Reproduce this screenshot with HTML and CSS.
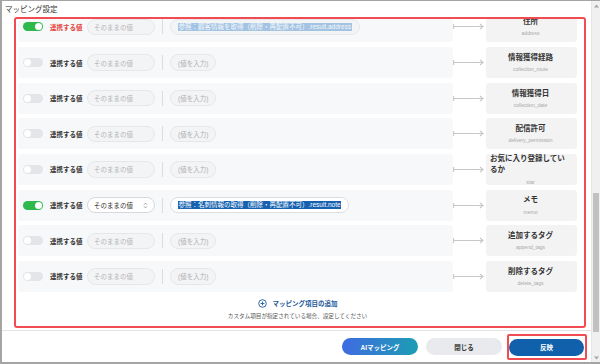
FILE: index.html
```html
<!DOCTYPE html>
<html lang="ja">
<head>
<meta charset="utf-8">
<link rel="stylesheet" href="styles.css">
</head>
<body>
<div class="frame">
  <div class="main">
    <div class="title">マッピング設定</div>
    <div class="mapbox">
      <div class="list">
        <div class="row">
          <div class="src">
            <span class="toggle on"><span class="knob"></span></span>
            <span class="label alert">連携する値</span>
            <span class="sel">そのままの値</span>
            <span class="sep"></span>
            <span class="val"><span class="mark pale">参照：顧客情報を取得（削除・再配置不可）.result.address</span></span>
          </div>
          <div class="arrow"><svg width="31" height="7" viewBox="0 0 31 7"><path d="M0.6 1v5M0.6 3.5H30M27 1l3 2.5-3 2.5" fill="none" stroke="#c8c8c8" stroke-width="1.1"/></svg></div>
          <div class="dst"><div class="t">住所</div><div class="s">address</div></div>
        </div>
        <div class="row">
          <div class="src">
            <span class="toggle"><span class="knob"></span></span>
            <span class="label">連携する値</span>
            <span class="sel">そのままの値</span>
            <span class="sep"></span>
            <span class="val">(値を入力)</span>
          </div>
          <div class="arrow"><svg width="31" height="7" viewBox="0 0 31 7"><path d="M0.6 1v5M0.6 3.5H30M27 1l3 2.5-3 2.5" fill="none" stroke="#c8c8c8" stroke-width="1.1"/></svg></div>
          <div class="dst"><div class="t">情報獲得経路</div><div class="s">collection_route</div></div>
        </div>
        <div class="row">
          <div class="src">
            <span class="toggle"><span class="knob"></span></span>
            <span class="label">連携する値</span>
            <span class="sel">そのままの値</span>
            <span class="sep"></span>
            <span class="val">(値を入力)</span>
          </div>
          <div class="arrow"><svg width="31" height="7" viewBox="0 0 31 7"><path d="M0.6 1v5M0.6 3.5H30M27 1l3 2.5-3 2.5" fill="none" stroke="#c8c8c8" stroke-width="1.1"/></svg></div>
          <div class="dst"><div class="t">情報獲得日</div><div class="s">collection_date</div></div>
        </div>
        <div class="row">
          <div class="src">
            <span class="toggle"><span class="knob"></span></span>
            <span class="label">連携する値</span>
            <span class="sel">そのままの値</span>
            <span class="sep"></span>
            <span class="val">(値を入力)</span>
          </div>
          <div class="arrow"><svg width="31" height="7" viewBox="0 0 31 7"><path d="M0.6 1v5M0.6 3.5H30M27 1l3 2.5-3 2.5" fill="none" stroke="#c8c8c8" stroke-width="1.1"/></svg></div>
          <div class="dst"><div class="t">配信許可</div><div class="s">delivery_permission</div></div>
        </div>
        <div class="row">
          <div class="src">
            <span class="toggle"><span class="knob"></span></span>
            <span class="label">連携する値</span>
            <span class="sel">そのままの値</span>
            <span class="sep"></span>
            <span class="val">(値を入力)</span>
          </div>
          <div class="arrow"><svg width="31" height="7" viewBox="0 0 31 7"><path d="M0.6 1v5M0.6 3.5H30M27 1l3 2.5-3 2.5" fill="none" stroke="#c8c8c8" stroke-width="1.1"/></svg></div>
          <div class="dst"><div class="t">お気に入り登録しているか</div><div class="s">star</div></div>
        </div>
        <div class="row">
          <div class="src">
            <span class="toggle on"><span class="knob"></span></span>
            <span class="label">連携する値</span>
            <span class="sel active">そのままの値<svg class="updown" width="5" height="7" viewBox="0 0 5 7"><path d="M1 2.6l1.5-1.5 1.5 1.5M1 4.4l1.5 1.5 1.5-1.5" fill="none" stroke="#777" stroke-width="0.7"/></svg></span>
            <span class="sep"></span>
            <span class="val active"><span class="mark dark">参照：名刺情報の取得（削除・再配置不可）.result.note</span></span>
          </div>
          <div class="arrow"><svg width="31" height="7" viewBox="0 0 31 7"><path d="M0.6 1v5M0.6 3.5H30M27 1l3 2.5-3 2.5" fill="none" stroke="#c8c8c8" stroke-width="1.1"/></svg></div>
          <div class="dst"><div class="t">メモ</div><div class="s">memo</div></div>
        </div>
        <div class="row">
          <div class="src">
            <span class="toggle"><span class="knob"></span></span>
            <span class="label">連携する値</span>
            <span class="sel">そのままの値</span>
            <span class="sep"></span>
            <span class="val">(値を入力)</span>
          </div>
          <div class="arrow"><svg width="31" height="7" viewBox="0 0 31 7"><path d="M0.6 1v5M0.6 3.5H30M27 1l3 2.5-3 2.5" fill="none" stroke="#c8c8c8" stroke-width="1.1"/></svg></div>
          <div class="dst"><div class="t">追加するタグ</div><div class="s">append_tags</div></div>
        </div>
        <div class="row">
          <div class="src">
            <span class="toggle"><span class="knob"></span></span>
            <span class="label">連携する値</span>
            <span class="sel">そのままの値</span>
            <span class="sep"></span>
            <span class="val">(値を入力)</span>
          </div>
          <div class="arrow"><svg width="31" height="7" viewBox="0 0 31 7"><path d="M0.6 1v5M0.6 3.5H30M27 1l3 2.5-3 2.5" fill="none" stroke="#c8c8c8" stroke-width="1.1"/></svg></div>
          <div class="dst"><div class="t">削除するタグ</div><div class="s">delete_tags</div></div>
        </div>
      </div>
      <div class="add">
        <svg width="9" height="9" viewBox="0 0 9 9"><circle cx="4.5" cy="4.5" r="3.8" fill="none" stroke="#1d5b9b" stroke-width="0.9"/><path d="M4.5 2.6v3.8M2.6 4.5h3.8" stroke="#1d5b9b" stroke-width="0.9"/></svg>
        <span>マッピング項目の追加</span>
      </div>
      <div class="note">カスタム項目が指定されている場合、設定してください</div>
    </div>
    <div class="footer">
      <button class="btn ai">AIマッピング</button>
      <button class="btn close">閉じる</button>
      <span class="hl"><button class="btn apply">反映</button></span>
    </div>
  </div>
  <div class="scrollbar">
    <div class="sb-arrow"><svg width="5" height="4" viewBox="0 0 5 4"><path d="M0 3.5L2.5 0.5 5 3.5z" fill="#a5a5a5"/></svg></div>
    <div class="sb-track"><div class="sb-thumb"></div></div>
    <div class="sb-arrow"><svg width="5" height="4" viewBox="0 0 5 4"><path d="M0 0.5L2.5 3.5 5 0.5z" fill="#a5a5a5"/></svg></div>
  </div>
</div>
</body>
</html>
```

FILE: styles.css
```css
* { box-sizing: border-box; margin: 0; padding: 0; }
html, body { width: 600px; height: 364px; overflow: hidden; background: #fff; }
body { font-family: "Liberation Sans", "Noto Sans CJK JP", sans-serif; color: #333; }

.frame {
  display: flex;
  height: 364px;
  border-left: 2px solid #a4a4a4;
  border-top: 1px solid #a4a4a4;
  border-bottom: 2px solid #a4a4a4;
}
.main { flex: 1; display: flex; flex-direction: column; min-width: 0; }

.title {
  height: 16px;
  padding-left: 3px;
  font-size: 7.5px;
  line-height: 18px;
  color: #333;
}

.mapbox {
  height: 310.5px;
  margin: 0 5px 0 12px;
  border: 2px solid #f24b51;
  border-radius: 3px;
  padding: 0 7px 0 2px;
  overflow: hidden;
  display: flex;
  flex-direction: column;
}

.list {
  margin-top: -7.67px;
  display: flex;
  flex-direction: column;
  gap: 4.67px;
}

.row { display: flex; height: 31px; flex-shrink: 0; }

.src {
  width: 435px;
  background: #f7f8f9;
  border-radius: 3px;
  display: flex;
  align-items: center;
  padding-left: 5px;
}

.toggle {
  width: 20px;
  height: 9px;
  border-radius: 5px;
  background: #e3e5e9;
  padding: 1px;
  display: flex;
}
.toggle .knob { width: 7px; height: 7px; border-radius: 50%; background: #fff; }
.toggle.on { background: #2fb84c; justify-content: flex-end; }

.label {
  margin-left: 7px;
  width: 33px;
  font-size: 6.5px;
  font-weight: bold;
  color: #333;
  white-space: nowrap;
}
.label.alert { color: #e8413c; }

.sel {
  margin-left: 4px;
  width: 68px;
  height: 16.5px;
  border-radius: 9px;
  border: 1px solid #e5e7ea;
  background: #f3f4f6;
  padding: 0 6px;
  display: flex;
  align-items: center;
  justify-content: space-between;
  font-size: 6.5px;
  color: #b5b5b5;
  white-space: nowrap;
}
.sel.active { background: #fff; border-color: #d6d8dc; color: #333; }
.updown { margin-right: 0; }

.sep { width: 1px; height: 15px; background: #dcdcdc; margin: 0 7px; }

.val {
  height: 16.5px;
  border-radius: 9px;
  border: 1px solid #e5e7ea;
  background: #f3f4f6;
  padding: 0 7px;
  display: flex;
  align-items: center;
  font-size: 6.5px;
  color: #b0b0b0;
  white-space: nowrap;
}
.val.active { background: #fff; border-color: #dcdee2; }
.mark { color: #fff; line-height: 8px; padding: 0 0.5px; }
.mark.pale { background: #a3c3e2; color: #f4f8fc; }
.mark.dark { background: #1662b0; }

.arrow { width: 33px; display: flex; align-items: center; }
.arrow svg { display: block; }

.dst {
  width: 91px;
  background: #f3f3f3;
  border-radius: 3px;
  display: flex;
  flex-direction: column;
  align-items: center;
  justify-content: center;
  padding: 0 6px 0 4px;
}
.dst .t { font-size: 7.5px; line-height: 11px; font-weight: bold; color: #333; }
.dst .s { font-size: 5px; line-height: 7px; color: #a8a8a8; margin-top: 3.3px; }

.add {
  margin-top: 6.8px;
  height: 9px;
  display: flex;
  align-items: center;
  justify-content: center;
  gap: 6px;
  font-size: 6.5px;
  font-weight: bold;
  color: #1d5b9b;
  flex-shrink: 0;
}
.add svg { display: block; }

.note {
  margin-top: 5.4px;
  font-size: 5.6px;
  line-height: 7px;
  color: #555;
  text-align: center;
  flex-shrink: 0;
}

.footer {
  margin-top: 2.5px;
  flex: 1;
  border-top: 1px solid #e3e3e3;
  display: flex;
  align-items: center;
  justify-content: flex-end;
  padding-right: 4px;
}

.btn {
  width: 76px;
  height: 17px;
  border: none;
  border-radius: 9px;
  font-family: "Liberation Sans", "Noto Sans CJK JP", sans-serif;
  font-size: 6.5px;
  font-weight: bold;
  display: flex;
  align-items: center;
  justify-content: center;
}
.ai { background: linear-gradient(90deg, #3f6be2, #1c9db3); color: #fff; }
.close { background: #e8eaed; color: #333; margin-left: 8px; }
.hl {
  margin-left: 5px;
  border: 2px solid #f24b51;
  border-radius: 2px;
  padding: 3px 1px 2px 0;
  display: flex;
}
.apply { width: 75px; background: #1160ab; color: #fff; }

.scrollbar {
  width: 9px;
  border-left: 1px solid #e6e6e6;
  background: #f0f0f0;
  display: flex;
  flex-direction: column;
}
.sb-arrow { height: 9px; display: flex; align-items: center; justify-content: center; }
.sb-arrow svg { display: block; }
.sb-track { flex: 1; padding: 0 1px; }
.sb-thumb { margin-top: 183px; height: 139px; background: #c1c1c1; }
```
